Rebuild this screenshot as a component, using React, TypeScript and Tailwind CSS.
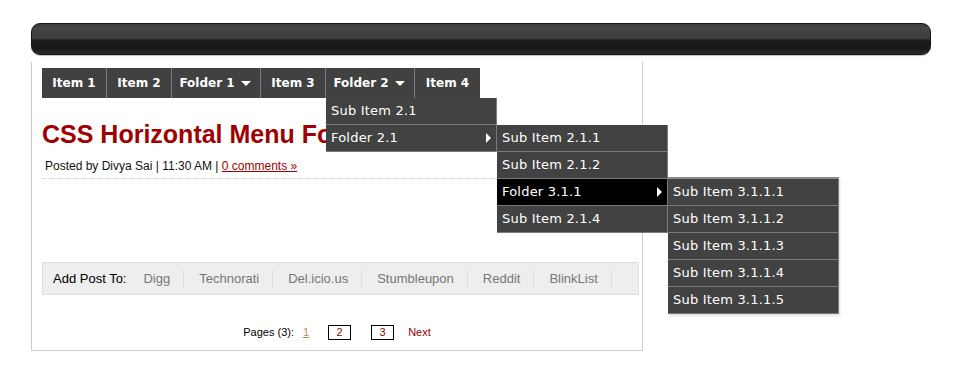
import type { ReactNode } from "react";

const DownArrow = () => (
  <span className="inline-block h-0 w-0 border-l-[5px] border-r-[5px] border-t-[5px] border-l-transparent border-r-transparent border-t-white" />
);

const RightArrow = () => (
  <span className="absolute right-[5px] top-1/2 -mt-[5px] h-0 w-0 border-b-[5px] border-l-[5px] border-t-[5px] border-b-transparent border-l-white border-t-transparent" />
);

function SubRow({
  label,
  active,
  arrow,
  children,
}: {
  label: string;
  active?: boolean;
  arrow?: boolean;
  children?: ReactNode;
}) {
  return (
    <li
      className={`relative flex h-[27px] items-center border-b border-[#7a7a7a] pl-[5px] ${
        active ? "bg-black" : ""
      }`}
    >
      {label}
      {arrow && <RightArrow />}
      {children}
    </li>
  );
}

function SubMenu({ className, children }: { className: string; children: ReactNode }) {
  return (
    <ul
      className={`absolute z-10 w-[171px] border-r border-[#7a7a7a] bg-[#424242] text-[13px] font-normal tracking-[0.2px] text-white ${className}`}
    >
      {children}
    </ul>
  );
}

function TopItem({
  label,
  wide,
  last,
  children,
}: {
  label: string;
  wide?: boolean;
  last?: boolean;
  children?: ReactNode;
}) {
  return (
    <li
      className={`relative flex h-full items-center justify-center gap-[6px] ${
        wide ? "w-[89px] pr-[2px]" : "w-[65px]"
      } ${last ? "" : "border-r border-[#7a7a8c]"}`}
    >
      <span>{label}</span>
      {wide && <DownArrow />}
      {children}
    </li>
  );
}

const shareLinks = ["Digg", "Technorati", "Del.icio.us", "Stumbleupon", "Reddit", "BlinkList"];

export default function App() {
  return (
    <div className="min-h-[368px] w-[965px] bg-white pl-[31px] pt-[23px] font-['Liberation_Sans',Arial,sans-serif]">
      <div className="h-[32px] w-[900px] rounded-[9px] border border-[#141414] bg-[linear-gradient(to_bottom,#3c3c3c_0%,#464646_15%,#3a3a3a_50%,#1c1c1c_53%,#181818_82%,#2b2b2b_100%)] shadow-[0_1px_1px_rgba(0,0,0,0.25)]" />

      <div className="mt-[7px] w-[612px] border-b border-l border-r border-[#cccccc] pb-[10px] pl-[10px] pr-[3px] pt-[6px]">
        <ul className="flex h-[30px] w-fit bg-[#414141] font-['DejaVu_Sans',Verdana,sans-serif] text-[12px] font-bold text-white">
          <TopItem label="Item 1" />
          <TopItem label="Item 2" />
          <TopItem label="Folder 1" wide />
          <TopItem label="Item 3" />
          <TopItem label="Folder 2" wide>
            <SubMenu className="left-0 top-full">
              <SubRow label="Sub Item 2.1" />
              <SubRow label="Folder 2.1" arrow>
                <SubMenu className="left-[171px] top-0">
                  <SubRow label="Sub Item 2.1.1" />
                  <SubRow label="Sub Item 2.1.2" />
                  <SubRow label="Folder 3.1.1" active arrow>
                    <SubMenu className="left-[171px] top-[-2px] border-t-2 border-t-[#8c8c8c] shadow-[1px_2px_2px_rgba(0,0,0,0.12)]">
                      <SubRow label="Sub Item 3.1.1.1" />
                      <SubRow label="Sub Item 3.1.1.2" />
                      <SubRow label="Sub Item 3.1.1.3" />
                      <SubRow label="Sub Item 3.1.1.4" />
                      <SubRow label="Sub Item 3.1.1.5" />
                    </SubMenu>
                  </SubRow>
                  <SubRow label="Sub Item 2.1.4" />
                </SubMenu>
              </SubRow>
            </SubMenu>
          </TopItem>
          <TopItem label="Item 4" last />
        </ul>

        <h1 className="mt-[21px] whitespace-nowrap text-[25px] font-bold leading-[30px] text-[#a00000]">
          CSS Horizontal Menu For Blogger
        </h1>

        <div className="mt-[10px] border-b border-dotted border-[#c8c8c8] pb-[5px] pl-[3px] text-[12px] leading-[14px] text-[#111]">
          Posted by Divya Sai | 11:30 AM |{" "}
          <a href="#" className="text-[#a00000] underline">
            0 comments »
          </a>
        </div>

        <div className="mt-[83px] flex h-[33px] items-center border border-[#dddddd] bg-[#eeeeee] pl-[10px] text-[13px]">
          <span className="mr-[2px] text-black">Add Post To:</span>
          {shareLinks.map((l) => (
            <span key={l} className="flex items-center">
              <a href="#" className="pl-[15px] pr-[13px] text-[#777777]">
                {l}
              </a>
              <span className="h-[16px] border-r border-dotted border-[#cccccc]" />
            </span>
          ))}
        </div>

        <div className="mt-[30px] flex h-[15px] items-center justify-center pr-[7px] text-[11px] text-black">
          <span>Pages (3):</span>
          <a href="#" className="ml-[9px] text-[#d0825a] underline">
            1
          </a>
          <a href="#" className="ml-[19px] flex h-[15px] w-[23px] items-center justify-center border border-black text-[#a00000]">
            2
          </a>
          <a href="#" className="ml-[20px] flex h-[15px] w-[23px] items-center justify-center border border-black text-[#a00000]">
            3
          </a>
          <a href="#" className="ml-[14px] text-[#a00000]">
            Next
          </a>
        </div>
      </div>
    </div>
  );
}
